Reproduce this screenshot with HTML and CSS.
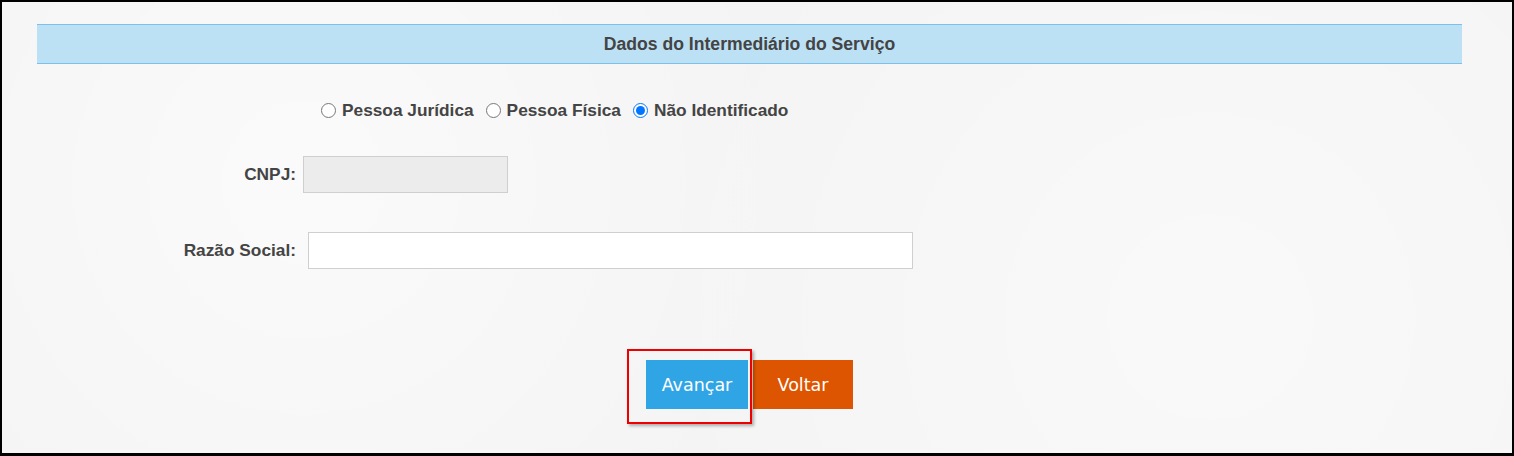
FILE: index.html
```html
<!DOCTYPE html>
<html lang="pt-BR">
<head>
  <meta charset="UTF-8">
  <title>Dados do Intermediário do Serviço</title>
  <link rel="stylesheet" href="styles.css">
</head>
<body>
  <div class="frame">
    <div class="section-title">Dados do Intermediário do Serviço</div>

    <!-- tipo de pessoa -->
    <div class="radio-row">
      <label><input type="radio" name="tipo">Pessoa Jurídica</label>
      <label><input type="radio" name="tipo">Pessoa Física</label>
      <label><input type="radio" name="tipo" checked>Não Identificado</label>
    </div>

    <div class="field-row row-cnpj">
      <span class="field-label">CNPJ:</span>
      <input type="text" class="input-cnpj" disabled>
    </div>

    <div class="field-row row-razao">
      <span class="field-label">Razão Social:</span>
      <input type="text" class="input-razao">
    </div>

    <div class="button-row">
      <button class="btn btn-next">Avançar</button>
      <button class="btn btn-back">Voltar</button>
      <div class="highlight"></div>
    </div>
  </div>
</body>
</html>
```

FILE: styles.css
```css
html, body {
  margin: 0;
  padding: 0;
}
body {
  font-family: "Liberation Sans", Arial, sans-serif;
  background-color: #fff;
}
.frame {
  box-sizing: border-box;
  width: 1514px;
  height: 456px;
  border: 2px solid #000;
  border-bottom-width: 3px;
  background-color: #f4f4f4;
  background-image: radial-gradient(circle at 20% 40%, rgba(255,255,255,0.6), rgba(255,255,255,0) 40%),
                    radial-gradient(circle at 80% 70%, rgba(255,255,255,0.5), rgba(255,255,255,0) 45%);
  overflow: hidden;
}
.section-title {
  margin: 22px 0 0 35px;
  width: 1425px;
  height: 38px;
  line-height: 38px;
  background-color: #bde1f4;
  border-top: 1px solid #7cc0ec;
  border-bottom: 1px solid #7cc0ec;
  text-align: center;
  font-size: 17.6px;
  font-weight: bold;
  color: #444;
}
.radio-row {
  display: flex;
  margin: 35px 0 0 319px;
  height: 22px;
  align-items: center;
  font-size: 17.3px;
  font-weight: bold;
  color: #444;
}
.radio-row label {
  display: flex;
  align-items: center;
  margin-right: 12px;
}
.radio-row input {
  width: 15px;
  height: 15px;
  margin: 0 6px 0 0;
}
.field-row {
  display: flex;
  align-items: center;
}
.field-label {
  width: 294px;
  text-align: right;
  font-size: 17.3px;
  font-weight: bold;
  color: #444;
}
.field-row input {
  box-sizing: border-box;
  height: 37px;
  border: 1px solid #cfcfcf;
  border-radius: 0;
  padding: 0 8px;
  font-size: 15px;
}
.row-cnpj {
  margin-top: 35px;
}
.input-cnpj {
  margin-left: 7px;
  width: 205px;
  background-color: #ececec;
}
.row-razao {
  margin-top: 39px;
}
.input-razao {
  margin-left: 12px;
  width: 605px;
  background-color: #fff;
}
.button-row {
  position: relative;
  display: flex;
  gap: 5px;
  margin: 91px 0 0 644px;
}
.btn {
  height: 49px;
  border: none;
  border-radius: 0;
  font-family: "DejaVu Sans", Verdana, sans-serif;
  font-size: 17.5px;
  color: #fff;
  cursor: pointer;
}
.btn-next {
  width: 102px;
  background-color: #30a5e6;
}
.btn-back {
  width: 100px;
  background-color: #dd5500;
}
.highlight {
  position: absolute;
  left: -19px;
  top: -11px;
  width: 121px;
  height: 71px;
  border: 2px solid #ee0000;
  box-shadow: 2px 2px 3px rgba(0,0,0,0.3);
  pointer-events: none;
}
```
